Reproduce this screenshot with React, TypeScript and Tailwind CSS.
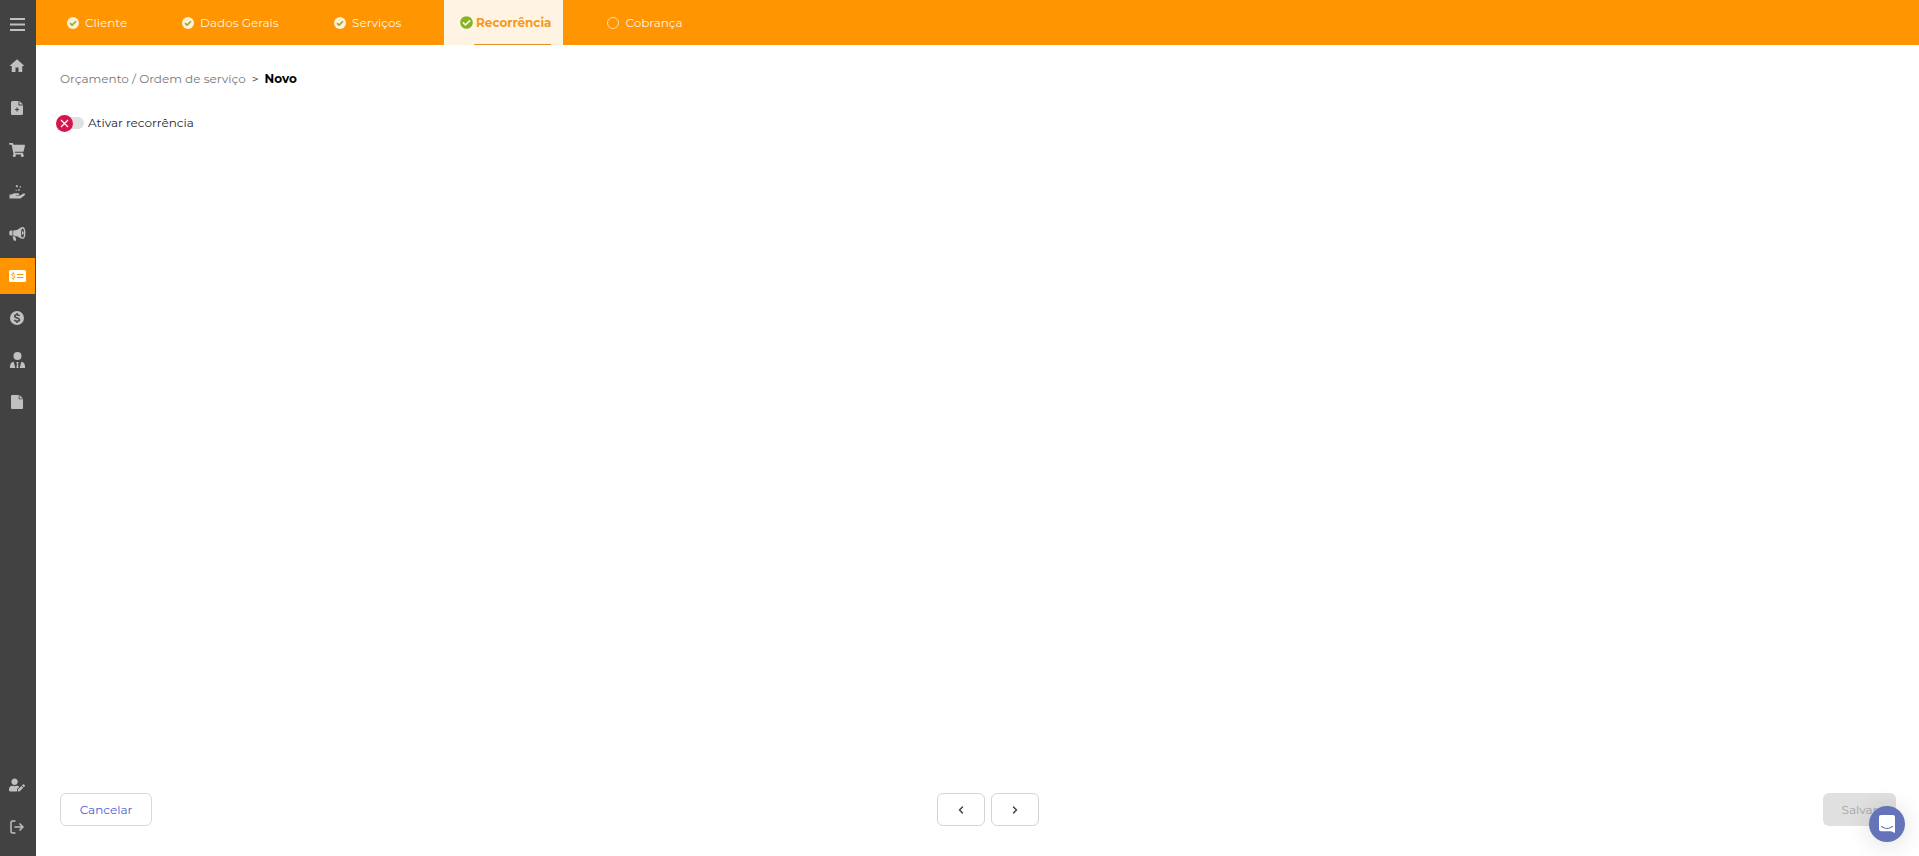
import { useState } from "react";
import { FaShoppingCart, FaUserEdit, FaCheckCircle } from "react-icons/fa";
import { MdHome } from "react-icons/md";
import { ChevronLeft, ChevronRight } from "lucide-react";

const MenuIcon = () => (
  <svg width="15" height="13" viewBox="0 0 15 13" fill="currentColor">
    <path d="M0 0h15v2H0ZM0 5.500h15v2H0ZM0 11h15v2H0Z" />
  </svg>
);

const NoteAddIcon = () => (
  <svg width="12" height="14" viewBox="0 0 12 14" fill="currentColor">
    <path
      fillRule="evenodd"
      d="M1.500 0H7.500v4.500H12v8A1.500 1.500 0 0 1 10.500 14h-9A1.500 1.500 0 0 1 0 12.500v-11A1.500 1.500 0 0 1 1.500 0ZM5.500 6.400v1.500H4v1.100h1.500v1.500h1.100V9h1.500V7.900H6.600V6.400Z"
    />
    <path d="M8.400 0L12 3.600H8.400Z" />
  </svg>
);

const HandIcon = () => (
  <svg width="17" height="16" viewBox="0 0 17 16" fill="currentColor">
    <path d="M.5 10.500h2.200l1.600-.9q.6-.3 1.300-.3h3.700a.8.8 0 0 1 0 1.700H7v.6h3.600q.6 0 1-.3l2.800-1.700a1 1 0 0 1 1.200 1.600l-3.500 2.700q-.7.6-1.600.6H.5Z" />
    <path d="M7.200 1l1.900.7-.7 1.700-1.800-.8ZM11 2.100l1.200.5-.5 1.200-1.200-.5ZM9.500 5l1.500.6-.6 1.400-1.400-.6ZM6.900 5.600l1 .4-.4 1-1-.4Z" />
  </svg>
);

const MegaphoneIcon = () => (
  <svg width="17" height="16" viewBox="0 0 17 16" fill="currentColor">
    <path d="M.3 6A1.500 1.500 0 0 1 1.800 4.500H3.500v5H1.800A1.500 1.500 0 0 1 .3 8ZM4.200 4.500q4.800-.2 7.700-3v11q-3-2.700-7.700-3ZM3.600 10.200l2.600.2.900 3a1 1 0 0 1-.9 1.300h-.8a1 1 0 0 1-.9-.7Z" />
    <ellipse cx="13.500" cy="7" rx="2.200" ry="5.200" fill="none" stroke="currentColor" strokeWidth="1.400" />
    <path d="M12.800 5q2 .3 2 2t-2 2Z" />
  </svg>
);

const MoneyCheckIcon = () => (
  <svg width="17" height="12" viewBox="0 0 17 12">
    <rect x="0" y="0" width="17" height="12" rx="1.500" fill="#fff" />
    <path
      d="M5.800 4.300C5.300 3.400 2.800 3.300 2.800 4.700C2.800 6.100 5.900 5.600 5.900 7.200C5.900 8.700 3.100 8.600 2.600 7.600M4.300 2.300v1.500M4.300 8.300v1.500M7.800 4.500h6.700M7.800 7.500h6.700"
      fill="none"
      stroke="#ff9500"
      strokeWidth="1"
    />
  </svg>
);

const DollarIcon = () => (
  <svg width="14" height="14" viewBox="0 0 14 14">
    <circle cx="7" cy="7" r="7" fill="currentColor" />
    <path
      d="M9.500 5.100C9 3.500 4.700 3.300 4.700 5.300C4.700 7.400 9.500 6.500 9.500 8.700C9.500 10.700 5 10.600 4.400 8.800M7 2v2M7 10v2"
      fill="none"
      stroke="#424242"
      strokeWidth="1.500"
    />
  </svg>
);

const UserTieIcon = () => (
  <svg width="15" height="16" viewBox="0 0 15 16" fill="currentColor">
    <circle cx="7.500" cy="4" r="4" />
    <path d="M0 16v-1.500Q0 10.500 3.700 9.800L5.300 16ZM15 16v-1.500q0-4-3.700-4.700L9.700 16ZM6.300 10h2.400l-.6 1.700L8.500 16H6.500l.4-4.300Z" />
  </svg>
);

const FileIcon = () => (
  <svg width="12" height="14" viewBox="0 0 12 14" fill="currentColor">
    <path d="M1 0h6.700v4.300H12V13a1 1 0 0 1-1 1H1a1 1 0 0 1-1-1V1a1 1 0 0 1 1-1Z" />
    <path d="M8.500 0L12 3.500H8.500Z" />
  </svg>
);

const ExitIcon = () => (
  <svg width="14" height="14" viewBox="0 0 14 14" fill="none" stroke="currentColor" strokeWidth="1.500">
    <path d="M5.500 1H2.500Q1 1 1 2.500v9Q1 13 2.500 13h3M4.500 7H13M9.500 3.500L13 7 9.500 10.500" />
  </svg>
);

const menu = [
  { label: "Menu", icon: <MenuIcon /> },
  { label: "Início", icon: <MdHome size={18} /> },
  { label: "Cadastros", icon: <NoteAddIcon /> },
  { label: "Vendas", icon: <FaShoppingCart size={16} /> },
  { label: "Compras", icon: <HandIcon /> },
  { label: "Marketing", icon: <MegaphoneIcon /> },
  { label: "Serviços", icon: <MoneyCheckIcon />, active: true },
  { label: "Financeiro", icon: <DollarIcon /> },
  { label: "Contador", icon: <UserTieIcon /> },
  { label: "Relatórios", icon: <FileIcon /> },
];

const account = [
  { label: "Meu perfil", icon: <FaUserEdit size={16} /> },
  { label: "Sair", icon: <ExitIcon /> },
];

const steps = [
  { label: "Cliente", state: "done", size: "min-w-[87px]" },
  { label: "Dados Gerais", state: "done", size: "min-w-[124px]" },
  { label: "Serviços", state: "done", size: "min-w-[98px]" },
  { label: "Recorrência", state: "active", size: "min-w-[118px]" },
  { label: "Cobrança", state: "todo", size: "min-w-[103px]" },
];

type Item = { label: string; icon: React.ReactNode; active?: boolean };

function SideItem({ label, icon, active }: Item) {
  return (
    <a
      href="#"
      aria-label={label}
      className={`flex h-9 items-center justify-center ${active ? "mr-px bg-[#ff9500] pr-px text-white" : "pr-0.5 text-[#c0c0c0]"}`}
    >
      {icon}
    </a>
  );
}

function StepIcon({ state }: { state: string }) {
  if (state === "active") return <FaCheckCircle size={13} className="shrink-0 text-[#84b522]" />;
  if (state === "todo") return <span className="size-3 shrink-0 rounded-full border border-[#ffdca8]" />;
  return (
    <svg width="12" height="12" viewBox="0 0 12 12" className="shrink-0">
      <circle cx="6" cy="6" r="6" fill="#fdf0d5" />
      <path d="M3 6.100l2.100 2L9 4.200" fill="none" stroke="#8eae35" strokeWidth="1.600" />
    </svg>
  );
}

export default function App() {
  const [recurring, setRecurring] = useState(false);

  return (
    <div className="flex min-h-screen bg-white font-['Montserrat','Inter',sans-serif] text-xs">
      <aside className="flex w-9 shrink-0 flex-col justify-between bg-[#424242] pt-1.5 pb-[11px]">
        <nav className="flex flex-col gap-1.5">
          {menu.map((item) => (
            <SideItem key={item.label} {...item} />
          ))}
        </nav>
        <nav className="flex flex-col gap-1.5">
          {account.map((item) => (
            <SideItem key={item.label} {...item} />
          ))}
        </nav>
      </aside>

      <div className="flex min-w-0 flex-1 flex-col">
        {/* Steps */}
        <header className="flex h-[45px] gap-7 bg-[#ff9500] pl-[15px]">
          {steps.map(({ label, state, size }) => (
            <button
              key={label}
              className={`flex items-center pl-4 whitespace-nowrap ${size} ${
                state === "active" ? "gap-px bg-[#fff3e4] pr-3 font-bold text-[#f59a1b]" : "gap-1.5 pr-2 text-[#fff4e0]"
              }`}
            >
              <StepIcon state={state} />
              {state === "active" ? (
                <span className="flex h-full items-center border-y border-t-transparent border-b-[#e8912a] pl-0.5">
                  {label}
                </span>
              ) : (
                label
              )}
            </button>
          ))}
        </header>

        <main className="flex flex-1 flex-col pr-[23px] pb-[30px] pl-6">
          <div className="mt-6 flex h-5 items-center gap-1.5">
            <a href="#" className="text-[#777]">
              Orçamento / Ordem de serviço
            </a>
            <span className="text-[#444]">&gt;</span>
            <span className="font-bold text-black">Novo</span>
          </div>

          <label className="mt-6 -ml-1 flex h-5 items-center gap-1 self-start text-[#212b31]">
            <span className="relative flex h-[17px] w-7 items-center">
              <input
                type="checkbox"
                checked={recurring}
                onChange={(e) => setRecurring(e.target.checked)}
                className="peer ml-1 h-3 w-6 appearance-none rounded-full bg-[#e0e0e0]"
              />
              <span className="pointer-events-none absolute left-0 flex size-[17px] items-center justify-center rounded-full bg-[#d3164b] peer-checked:left-3 peer-checked:bg-[#84b522]">
                <svg width="9" height="9" viewBox="0 0 9 9" fill="none" stroke="#fff" strokeWidth="1.200">
                  <path d="M1 1l7 7M8 1L1 8" />
                </svg>
              </span>
            </span>
            Ativar recorrência
          </label>

          <footer className="mt-auto flex h-[33px] items-stretch justify-between">
            <button className="w-[92px] rounded-md border border-[#d9d9d9] text-[#4a5fd0]">Cancelar</button>
            <div className="flex gap-1.5">
              <button
                aria-label="Anterior"
                className="flex w-12 items-center justify-center rounded-md border border-[#d4d4d4] text-[#444]"
              >
                <ChevronLeft size={12} strokeWidth={3} />
              </button>
              <button
                aria-label="Próximo"
                className="flex w-12 items-center justify-center rounded-md border border-[#d4d4d4] text-[#444]"
              >
                <ChevronRight size={12} strokeWidth={3} />
              </button>
            </div>
            <button disabled className="w-[73px] rounded-md bg-[#e0e0e0] text-[#a6a6a6]">
              Salvar
            </button>
          </footer>
        </main>
      </div>

      {/* Chat launcher */}
      <button
        aria-label="Abrir chat"
        className="fixed right-3.5 bottom-3.5 flex size-9 items-center justify-center rounded-full bg-[#6574b9] shadow-[0_2px_24px_rgba(0,0,0,0.14)]"
      >
        <svg width="16" height="18" viewBox="0 0 16 18">
          <path d="M2 0h12a2 2 0 0 1 2 2v16l-4-1.700H2a2 2 0 0 1-2-2V2a2 2 0 0 1 2-2Z" fill="#fff" />
          <path d="M2.500 11.500q5.500 4 11 0" fill="none" stroke="#6574b9" strokeWidth="1.100" strokeLinecap="round" />
        </svg>
      </button>
    </div>
  );
}
